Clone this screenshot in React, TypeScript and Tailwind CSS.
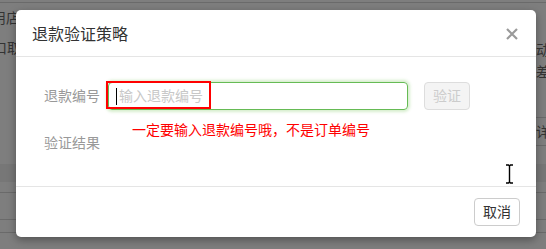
import React from "react";

const cjk = { fontFamily: '"Liberation Sans", "Noto Sans CJK SC", sans-serif' };

function BackgroundPage() {
  return (
    <div className="absolute inset-0 flex flex-col text-[14px] text-[#333] leading-[18px]">
      <div className="h-[2px] shrink-0" />
      <div className="h-px shrink-0 bg-[#6a6a6a]" />
      <div className="h-[161px] shrink-0 flex justify-between">
        <div className="flex flex-col pt-[6px] ml-[-8px]">
          <span>用店</span>
          <span className="mt-[12px] ml-[1px]">口取</span>
        </div>
        <div className="w-[26px] flex flex-col pt-[38px]">
          <span className="pl-[16px]">动</span>
          <span className="pl-[16px] mt-[4px]">差</span>
          <div className="h-px bg-[#6a6a6a] mt-[36px]" />
          <span className="pl-[16px] mt-[5px]">详</span>
          <div className="h-px bg-[#6a6a6a] mt-[4px]" />
        </div>
      </div>
      <div className="h-[18px] shrink-0 bg-[#777]" />
      <div className="h-px shrink-0 bg-[#6a6a6a] mt-[10px]" />
      <div className="h-px shrink-0 bg-[#6a6a6a] mt-[26px]" />
      <div className="h-px shrink-0 bg-[#6a6a6a] mt-[12px]" />
    </div>
  );
}

export default function App() {
  return (
    <div className="relative w-[546px] h-[249px] overflow-hidden bg-[#7e7e7e]" style={cjk}>
      <BackgroundPage />

      {/* modal */}
      <div className="absolute left-[16px] top-[10px] w-[520px] h-[227px] bg-white rounded-[5px] shadow-[0_3px_9px_rgba(0,0,0,0.35)] flex flex-col">
        <div className="h-[47px] border-b border-[#e5e5e5] flex items-center justify-between pl-[16px] pr-[18px]">
          <span className="text-[16px] text-[#333] leading-[20px] pt-[3px]">退款验证策略</span>
          <svg width="12" height="12" viewBox="0 0 12 12" className="mt-[2px]">
            <path d="M1 1L11 11M11 1L1 11" stroke="#9a9a9a" strokeWidth="2.2" strokeLinecap="butt" />
          </svg>
        </div>
        <div className="h-[130px] border-b border-[#e5e5e5] pt-[25px] pl-[28px]">
          <div className="flex items-center h-[28px]">
            <span className="w-[56px] text-[14px] text-[#999]">退款编号</span>
            <div className="relative ml-[8px] w-[300px] h-[28px] rounded-[4px] border border-[#66bb55] shadow-[0_0_3px_2px_rgba(120,200,90,0.3)] flex items-center pl-[7px] gap-[2px]">
              <span className="w-px h-[17px] bg-black" />
              <span className="text-[14px] text-[#c8c8c8]">输入退款编号</span>
              <div className="absolute left-[-3px] top-[-2px] w-[105px] h-[28px] border-2 border-[#ff0000]" />
            </div>
            <button className="ml-[16px] w-[46px] h-[28px] rounded-[4px] border border-[#ddd] bg-[#f4f4f4] text-[14px] text-[#ccc]" style={cjk}>
              验证
            </button>
          </div>
          <div className="mt-[12px] ml-[88px] text-[14px] leading-[16px] text-[#ff0000]">一定要输入退款编号哦，不是订单编号</div>
          <div className="mt-[-4px] text-[14px] leading-[18px] text-[#999]">验证结果</div>
        </div>
        <div className="flex-1 flex justify-end items-start pt-[11px] pr-[16px]">
          <button className="w-[46px] h-[28px] rounded-[4px] border border-[#ccc] bg-white text-[14px] text-[#333]" style={cjk}>
            取消
          </button>
        </div>
      </div>

      {/* mouse I-beam cursor */}
      <svg className="absolute left-[505px] top-[164px]" width="9" height="20" viewBox="0 0 9 20">
        <path d="M1 1h2.5l1 1 1-1H8M4.5 2v16M1 19h2.5l1-1 1 1H8" stroke="#000" strokeWidth="1.4" fill="none" />
      </svg>
    </div>
  );
}
